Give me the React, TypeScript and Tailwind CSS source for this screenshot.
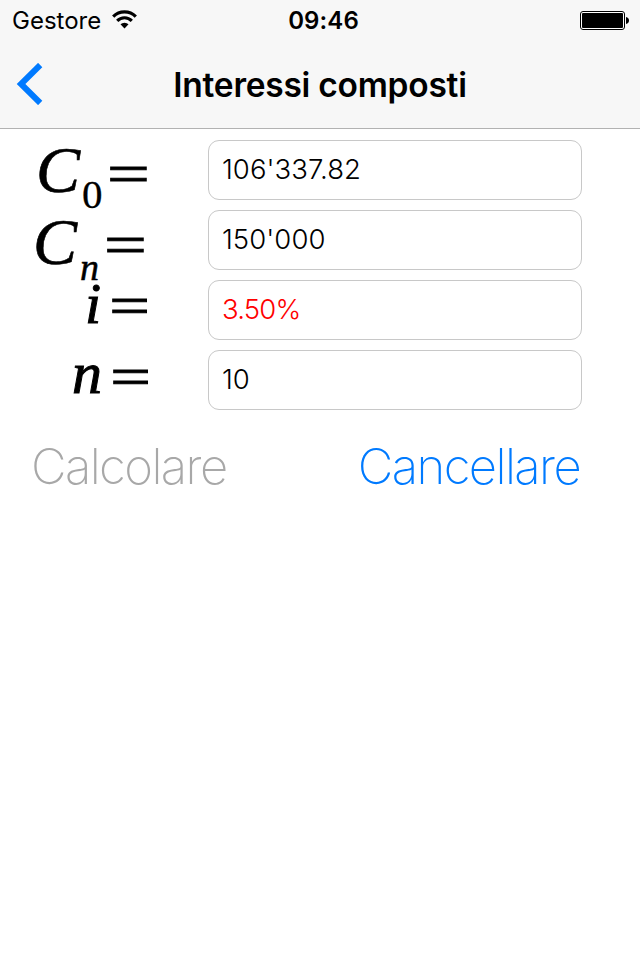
import { useState } from "react";

type FieldKey = "initial" | "final" | "rate" | "periods";

const initialValues: Record<FieldKey, string> = {
  initial: "106'337.82",
  final: "150'000",
  rate: "3.50%",
  periods: "10",
};

const emptyValues: Record<FieldKey, string> = { initial: "", final: "", rate: "", periods: "" };

function StatusBar() {
  return (
    <div className="flex h-10 items-center pl-3 pr-[11px]">
      <div className="flex flex-1 items-center gap-[11px]">
        <span className="pt-[2px] text-[24px] leading-10">Gestore</span>
        <svg width="25" height="19" viewBox="0 0 25 19" className="mb-px">
          <path d="M1.2 6.6a16 16 0 0 1 22.6 0" fill="none" stroke="#000" strokeWidth="3.2" />
          <path d="M5.2 10.8a10.3 10.3 0 0 1 14.6 0" fill="none" stroke="#000" strokeWidth="3.2" />
          <path d="M12.5 18.5l-4-4.2a5.7 5.7 0 0 1 8 0z" fill="#000" />
        </svg>
      </div>
      <span className="pl-[6px] pt-[2px] text-[24px] font-semibold leading-10 tracking-[0.1px]">09:46</span>
      <div className="flex flex-1 justify-end">
        <svg width="49" height="20" viewBox="0 0 49 20">
          <rect x="0.5" y="1.5" width="44" height="18" rx="2.5" fill="#fff" stroke="#000" />
          <rect x="2" y="3" width="41" height="15" rx="1" fill="#000" />
          <path d="M46 7c2 .6 3 1.8 3 3.5s-1 2.9-3 3.5z" fill="#000" />
        </svg>
      </div>
    </div>
  );
}

function NavBar() {
  return (
    <div className="flex h-[88px] items-center px-4">
      <button type="button" aria-label="Indietro" className="w-12">
        <svg width="28" height="42" viewBox="0 0 28 42">
          <path d="M24.2 2L5 21l19.2 19" fill="none" stroke="#007aff" strokeWidth="6" />
        </svg>
      </button>
      <h1 className="flex-1 pt-[2px] text-center text-[33.5px] font-semibold leading-[86px] tracking-[-0.25px]">Interessi composti</h1>
      <div className="w-12" />
    </div>
  );
}

interface FieldProps {
  value: string;
  onChange: (value: string) => void;
  computed?: boolean;
}

function Field({ value, onChange, computed }: FieldProps) {
  return (
    <input
      type="text"
      value={value}
      onChange={(e) => onChange(e.target.value)}
      className={`h-[60px] w-[374px] rounded-[11px] border border-[#c8c8c8] bg-white px-[13px] pb-[2px] font-['Inter',sans-serif] text-[27.5px] font-light outline-none ${computed ? "tracking-[-0.8px] text-[#ff0000]" : "tracking-[0.05px] text-black"}`}
    />
  );
}

export default function App() {
  const [values, setValues] = useState(initialValues);

  const update = (key: FieldKey) => (value: string) => setValues({ ...values, [key]: value });

  return (
    <div className="h-[960px] w-[640px] overflow-hidden bg-white font-['Inter',sans-serif] text-black">
      <header className="h-[129px] border-b border-[#b2b2b2] bg-[#f7f7f7]">
        <StatusBar />
        <NavBar />
      </header>

      <main className="pt-[11px]">
        <div className="flex flex-col gap-[10px] font-['Liberation_Serif',serif] leading-none">
          <div className="flex h-[60px]">
            <div className="flex w-[208px] items-start pl-[36px]">
              <span className="-mt-[3px] text-[66px] italic leading-none [-webkit-text-stroke:0.6px]">C</span>
              <span className="ml-[2px] mt-[34px] text-[41px] leading-none [-webkit-text-stroke:0.3px]">0</span>
              <span className="ml-[9px] mt-[5px] scale-x-[1.31] text-[58px] leading-none [-webkit-text-stroke:1px]">=</span>
            </div>
            <Field value={values.initial} onChange={update("initial")} />
          </div>
          <div className="flex h-[60px]">
            <div className="flex w-[208px] items-start pl-[33px]">
              <span className="-mt-px text-[66px] italic leading-none [-webkit-text-stroke:0.6px]">C</span>
              <span className="ml-[3px] mt-[38px] text-[38px] italic leading-none [-webkit-text-stroke:0.5px]">n</span>
              <span className="ml-[10px] mt-[6px] scale-x-[1.31] text-[58px] leading-none [-webkit-text-stroke:1px]">=</span>
            </div>
            <Field value={values.final} onChange={update("final")} />
          </div>
          <div className="flex h-[60px]">
            <div className="flex w-[208px] items-start pl-[85px]">
              <span className="-mt-[5px] text-[58px] italic leading-none [-webkit-text-stroke:1px]">i</span>
              <span className="-mt-[2px] ml-[13px] scale-x-[1.31] text-[55px] leading-none [-webkit-text-stroke:1px]">=</span>
            </div>
            <Field value={values.rate} onChange={update("rate")} computed />
          </div>
          <div className="flex h-[60px]">
            <div className="flex w-[208px] items-start pl-[72px]">
              <span className="-mt-[7px] text-[60px] italic leading-none [-webkit-text-stroke:1px]">n</span>
              <span className="-mt-px ml-[13px] scale-x-[1.31] text-[55px] leading-none [-webkit-text-stroke:1px]">=</span>
            </div>
            <Field value={values.periods} onChange={update("periods")} />
          </div>
        </div>

        <div className="flex justify-between pl-[31px] pr-[60px] pt-[27px]">
          <button type="button" disabled className="text-[49px] font-extralight leading-[60px] tracking-[-1.6px] text-[#a8a8a8]">
            Calcolare
          </button>
          <button
            type="button"
            onClick={() => setValues(emptyValues)}
            className="text-[49px] font-extralight leading-[60px] tracking-[-1.6px] text-[#007aff]"
          >
            Cancellare
          </button>
        </div>
      </main>
    </div>
  );
}
